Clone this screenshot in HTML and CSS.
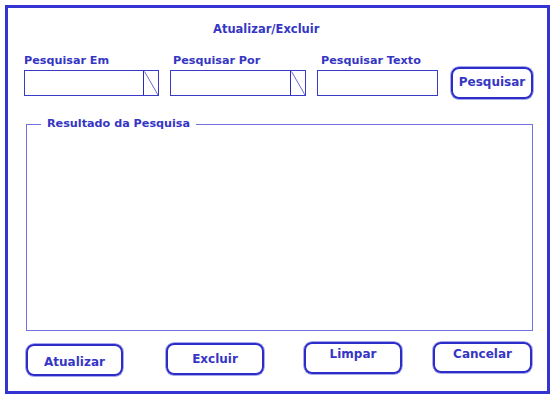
FILE: index.html
```html
<!DOCTYPE html>
<html lang="pt">
<head>
<meta charset="utf-8">
<title>Atualizar/Excluir</title>
<link rel="stylesheet" href="styles.css">
</head>
<body>
<div class="frame">
  <div class="title">Atualizar/Excluir</div>
  <div class="search-row">
    <div class="field field-em">
      <div class="label">Pesquisar Em</div>
      <div class="box combo">
        <div class="combo-text"></div>
        <div class="combo-btn"><svg width="14" height="24" viewBox="0 0 14 24"><line x1="0.5" y1="0.5" x2="14" y2="24" stroke="#6a6ad0" stroke-width="1"/></svg></div>
      </div>
    </div>
    <div class="field field-por">
      <div class="label">Pesquisar Por</div>
      <div class="box combo">
        <div class="combo-text"></div>
        <div class="combo-btn"><svg width="14" height="24" viewBox="0 0 14 24"><line x1="0.5" y1="0.5" x2="14" y2="24" stroke="#6a6ad0" stroke-width="1"/></svg></div>
      </div>
    </div>
    <div class="field field-texto">
      <div class="label">Pesquisar Texto</div>
      <div class="box"></div>
    </div>
    <div class="btn btn-search">Pesquisar</div>
  </div>
  <div class="results">
    <span class="legend">Resultado da Pesquisa</span>
  </div>
  <div class="actions">
    <div class="btn btn-atualizar">Atualizar</div>
    <div class="btn btn-excluir">Excluir</div>
    <div class="btn btn-limpar">Limpar</div>
    <div class="btn btn-cancelar">Cancelar</div>
  </div>
</div>
</body>
</html>
```

FILE: styles.css
```css
html, body {
  margin: 0;
  padding: 0;
  background: #ffffff;
}
body {
  font-family: "DejaVu Sans", Verdana, sans-serif;
  font-weight: bold;
  font-size: 11px;
  color: #3636c4;
}
.frame {
  box-sizing: border-box;
  margin: 5px 0 0 5px;
  width: 545px;
  height: 389px;
  border: 3px solid #3434d2;
  display: flex;
  flex-direction: column;
}
.title {
  padding: 14px 0 0 205px;
  height: 14px;
  line-height: 14px;
  font-size: 11.5px;
}
.search-row {
  display: flex;
  align-items: flex-start;
  padding: 18px 0 0 16px;
}
.field {
  display: flex;
  flex-direction: column;
}
.label {
  height: 16px;
  line-height: 14px;
  font-size: 11.2px;
}
.field-em { width: 135px; }
.field-por { width: 136px; margin-left: 11px; }
.field-texto { width: 121px; margin-left: 11px; }
.field-por .label { padding-left: 3px; }
.field-texto .label { padding-left: 4px; }
.box {
  box-sizing: border-box;
  height: 26px;
  border: 1px solid #3a3ac8;
}
.combo {
  display: flex;
}
.combo-text {
  flex: 1;
}
.combo-btn {
  width: 14px;
  border-left: 1px solid #2a2ab8;
  display: flex;
}
.combo-btn svg {
  display: block;
}
.btn {
  box-sizing: border-box;
  border: 2px solid #2c2cc8;
  border-radius: 8px;
  box-shadow: 0 0 0 0.7px #8a8ae6;
  display: flex;
  justify-content: center;
  font-size: 12px;
}
.btn-search {
  width: 82px;
  height: 32px;
  margin: 13px 0 0 13px;
  align-items: center;
  padding-bottom: 2px;
}
.results {
  position: relative;
  box-sizing: border-box;
  margin: 25px 0 0 18px;
  width: 507px;
  height: 209px;
  border: 1px solid #7272de;
}
.legend {
  position: absolute;
  left: 14px;
  top: -9px;
  padding: 0 6px;
  background: #ffffff;
  line-height: 16px;
  font-size: 11.2px;
}
.actions {
  height: 50px;
  margin-top: 11px;
  display: flex;
  align-items: flex-start;
  padding-left: 18px;
}
.btn-atualizar {
  width: 97px;
  height: 32px;
  margin-top: 2px;
  align-items: center;
  padding-top: 4px;
}
.btn-excluir {
  width: 98px;
  height: 32px;
  margin: 1px 0 0 43px;
  align-items: center;
}
.btn-limpar {
  width: 98px;
  height: 32px;
  margin-left: 40px;
  align-items: flex-start;
  padding-top: 3px;
}
.btn-cancelar {
  width: 99px;
  height: 31px;
  margin-left: 31px;
  align-items: flex-start;
  padding-top: 3px;
}
```
